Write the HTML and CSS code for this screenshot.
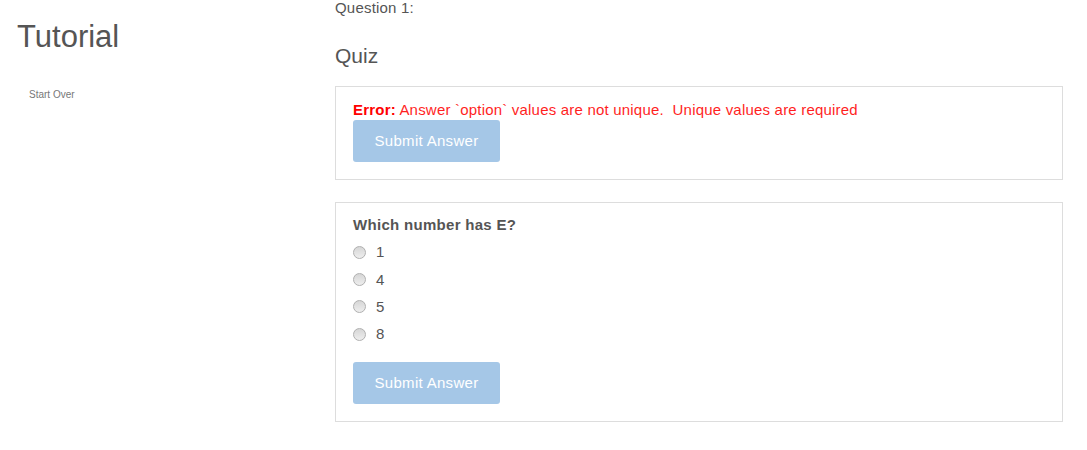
FILE: index.html
```html
<!DOCTYPE html>
<html>
<head>
<meta charset="utf-8">
<title>Tutorial</title>
<link rel="stylesheet" href="styles.css">
</head>
<body>
<div class="page">
  <aside class="sidebar">
    <h1 class="title">Tutorial</h1>
    <a class="start-over" href="#">Start Over</a>
  </aside>
  <main class="main">
    <div class="question-num">Question 1:</div>
    <h3 class="quiz-title">Quiz</h3>
    <div class="panel panel-error">
      <div class="error-msg"><strong>Error:</strong> Answer `option` values are not unique.&nbsp; Unique values are required</div>
      <button class="btn" disabled>Submit Answer</button>
    </div>
    <div class="panel panel-question">
      <div class="options">
        <div class="q-label">Which number has E?</div>
        <label class="option"><span class="radio"></span><span>1</span></label>
        <label class="option"><span class="radio"></span><span>4</span></label>
        <label class="option"><span class="radio"></span><span>5</span></label>
        <label class="option"><span class="radio"></span><span>8</span></label>
      </div>
      <button class="btn btn-q" disabled>Submit Answer</button>
    </div>
  </main>
</div>
</body>
</html>
```
FILE: styles.css
```css
* { box-sizing: border-box; }
html, body { margin: 0; padding: 0; background: #fff; }
body {
  font-family: "Liberation Sans", Arial, sans-serif;
  font-size: 15px;
  letter-spacing: 0.2px;
  line-height: 20px;
  color: #555;
}
.page {
  display: flex;
  align-items: flex-start;
}
.sidebar {
  width: 335px;
  flex: none;
  padding-left: 17px;
  display: flex;
  flex-direction: column;
}
.title {
  margin: 20px 0 0 0;
  font-size: 31px;
  line-height: 33px;
  letter-spacing: 0;
  font-weight: normal;
  color: #555;
}
.start-over {
  margin-top: 35px;
  margin-left: 12px;
  font-size: 10px;
  line-height: 14px;
  letter-spacing: 0;
  color: #777;
  text-decoration: none;
}
.main {
  width: 728px;
  flex: none;
  display: flex;
  flex-direction: column;
}
.question-num {
  line-height: 16px;
  color: #555;
}
.quiz-title {
  margin: 28px 0 18px 0;
  font-size: 21px;
  line-height: 24px;
  letter-spacing: 0;
  font-weight: normal;
  color: #555;
}
.panel {
  border: 1px solid #ddd;
  padding: 13px 17px 17px 17px;
  display: flex;
  flex-direction: column;
  align-items: flex-start;
}
.panel-question {
  margin-top: 22px;
  padding-top: 12px;
}
.error-msg {
  color: #ff1f1f;
}
.error-msg strong {
  color: #f00;
}
.btn {
  height: 42px;
  width: 147px;
  padding: 0;
  border: none;
  border-radius: 3px;
  background: #a5c7e7;
  color: #fff;
  font-family: "Liberation Sans", Arial, sans-serif;
  font-size: 15px;
  letter-spacing: 0.3px;
  line-height: 42px;
  text-align: center;
}
.btn-q {
  margin-top: 18px;
}
.options {
  display: flex;
  flex-direction: column;
  gap: 7.33px;
}
.q-label {
  font-weight: bold;
  letter-spacing: 0.3px;
}
.option {
  display: flex;
  align-items: center;
  gap: 10px;
  height: 20px;
}
.radio {
  width: 13px;
  height: 13px;
  border-radius: 50%;
  border: 1px solid #b0b0b0;
  background: linear-gradient(#d6d6d6, #eeeeee);
  flex: none;
}
```
